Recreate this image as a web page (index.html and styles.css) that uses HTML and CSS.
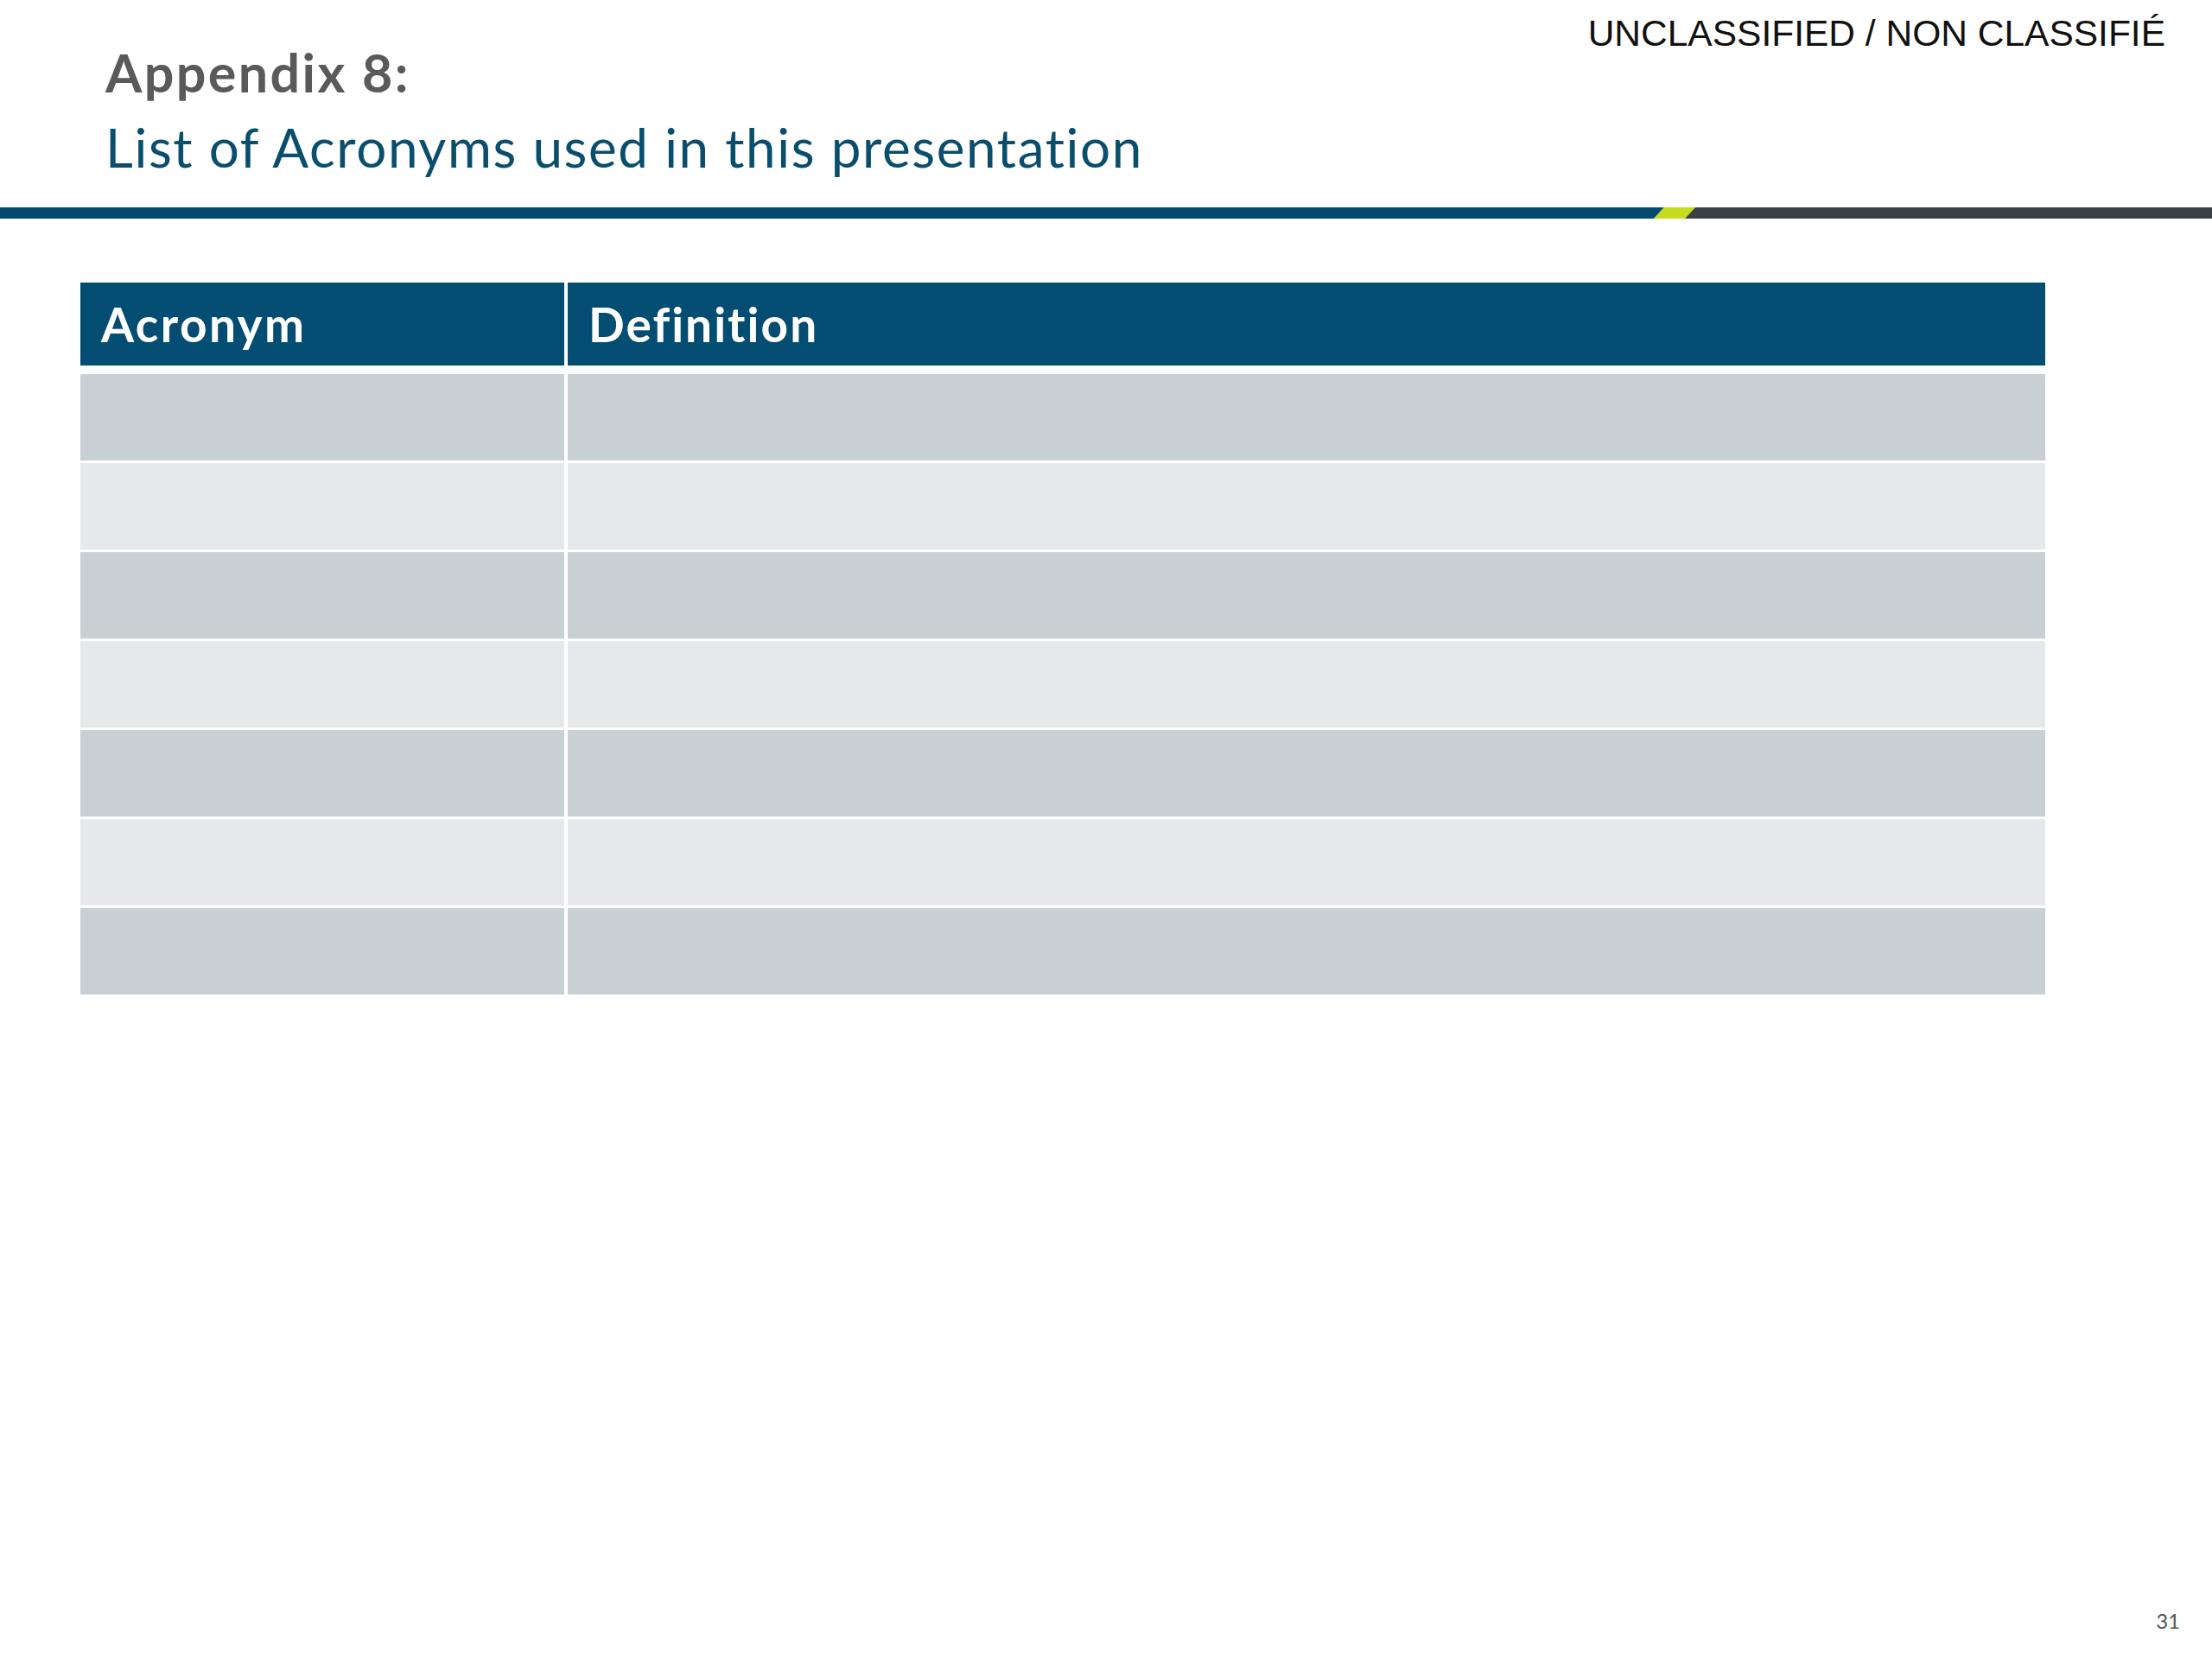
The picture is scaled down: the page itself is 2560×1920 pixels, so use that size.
FILE: index.html
```html
<!DOCTYPE html>
<html lang="en">
<head>
<meta charset="utf-8">
<title>Appendix 8: List of Acronyms</title>
<link rel="stylesheet" href="styles.css">
</head>
<body>
<div class="slide">
  <header class="top">
    <div class="titles">
      <h1 class="kicker">Appendix 8:</h1>
      <h2 class="title">List of Acronyms used in this presentation</h2>
    </div>
    <div class="classif">UNCLASSIFIED / NON CLASSIFIÉ</div>
  </header>
  <svg class="rule" width="2560" height="13" viewBox="0 0 2560 13" preserveAspectRatio="none">
    <polygon points="0,0 1926,0 1914,13 0,13" fill="#024b6e"/>
    <polygon points="1926,0 1962,0 1950,13 1914,13" fill="#c6dc1f"/>
    <polygon points="1962,0 2560,0 2560,13 1950,13" fill="#3b4045"/>
  </svg>
  <div class="table">
    <div class="th">Acronym</div>
    <div class="th th-def">Definition</div>
    <div class="td dark"></div><div class="td dark"></div>
    <div class="td light"></div><div class="td light"></div>
    <div class="td dark"></div><div class="td dark"></div>
    <div class="td light"></div><div class="td light"></div>
    <div class="td dark"></div><div class="td dark"></div>
    <div class="td light"></div><div class="td light"></div>
    <div class="td dark"></div><div class="td dark"></div>
  </div>
  <footer class="foot">31</footer>
</div>
</body>
</html>
```

FILE: styles.css
```css
html, body {
  margin: 0;
  padding: 0;
  background: #ffffff;
}

.slide {
  width: 2560px;
  height: 1920px;
  display: flex;
  flex-direction: column;
  font-family: Lato, "Liberation Sans", sans-serif;
  overflow: hidden;
}

.top {
  display: flex;
  justify-content: space-between;
  align-items: flex-start;
  height: 240px;
}

.titles {
  padding-left: 122px;
  padding-top: 47px;
}

.kicker {
  margin: 0;
  font-size: 61px;
  line-height: 74px;
  font-weight: 700;
  letter-spacing: 2.4px;
  color: #5a5a5a;
}

.title {
  margin: 0;
  font-size: 62px;
  line-height: 98px;
  font-weight: 400;
  letter-spacing: 1.6px;
  color: #0a4e6e;
}

.classif {
  font-family: "Liberation Sans", Arial, sans-serif;
  font-size: 42.5px;
  line-height: 48px;
  color: #111111;
  padding-top: 15px;
  padding-right: 54px;
}

.rule {
  display: block;
  width: 2560px;
  height: 13px;
  flex: none;
}

.table {
  margin-top: 74px;
  margin-left: 93px;
  display: grid;
  grid-template-columns: 560px 1710px;
  grid-template-rows: 103px;
  grid-auto-rows: 100px;
  column-gap: 4px;
  row-gap: 3px;
}

.th {
  background: #024d71;
  color: #ffffff;
  font-size: 55px;
  font-weight: 700;
  line-height: 96px;
  height: 96px;
  letter-spacing: 2.4px;
  padding-left: 24px;
  margin-bottom: 7px;
}

.th-def {
  letter-spacing: 2px;
}

.td.dark {
  background: #c9d0d4;
}

.td.light {
  background: #e6e8ea;
}

.foot {
  margin-top: auto;
  align-self: flex-end;
  font-size: 24px;
  line-height: 29px;
  color: #555555;
  padding-right: 37px;
  padding-bottom: 30px;
}
```
